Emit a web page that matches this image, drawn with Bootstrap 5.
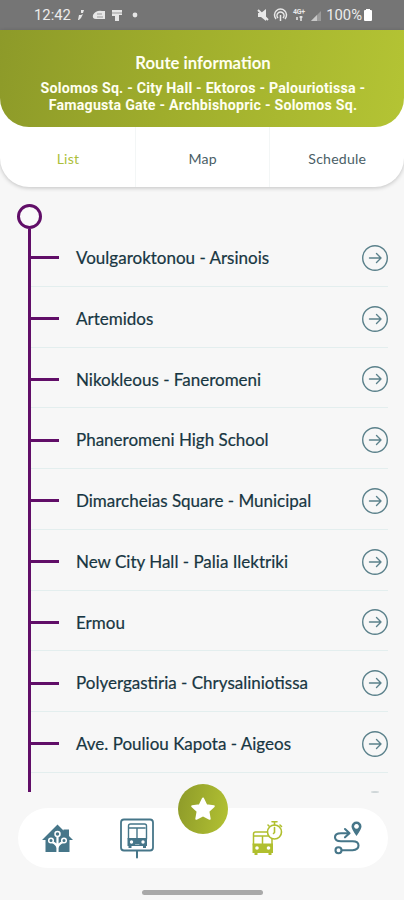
<!DOCTYPE html>
<html lang="en">
<head>
<meta charset="utf-8">
<meta name="viewport" content="width=device-width, initial-scale=1">
<title>Route information</title>
<link rel="stylesheet" href="https://cdn.jsdelivr.net/npm/bootstrap@5.3.0/dist/css/bootstrap.min.css">
<style>
  body { font-family: Lato, "Open Sans", sans-serif; background: #f7f7f7; color: #173642; }
  .screen { width: 404px; height: 900px; }
  .statusbar { height: 30px; background: #757575; color: #ececec; font: 14.8px/30px Roboto, sans-serif; padding: 0 31px 0 34px; }
  .top-panel { background: #fff; border-radius: 0 0 29px 29px; box-shadow: 0 1px 4px rgba(0,0,0,.22); height: 157px; }
  .route-head { height: 97px; border-radius: 0 0 29px 29px; background: linear-gradient(100deg, #8d9a29 0%, #9fad2c 42%, #b4c434 100%); color: #fffff0; padding-top: 22px; }
  .route-head h1 { font-size: 16.7px; line-height: 22px; font-weight: 700; margin: 0 0 6px; padding-left: 2px; }
  .route-head p { font: 700 14.2px/17px Roboto, sans-serif; letter-spacing: .22px; margin: 0; padding-left: 2px; }
  .view-tabs { height: 60px; font-size: 14.1px; letter-spacing: .2px; padding-left: 1px; }
  .view-tabs a { color: #4a5e66; text-decoration: none; padding-top: 3px; }
  .view-tabs a + a { border-left: 1px solid #f3f6f6; }
  .view-tabs a.current { color: #adbf3b; }
  .stops { padding: 17px 16px 0 17px; height: 605px; }
  .terminus { width: 25px; height: 25px; border: 3px solid #610e68; border-radius: 50%; background: #fafafa; }
  .track { width: 3px; background: #610e68; margin-left: 11px; height: 563px; }
  .stop-list { margin-top: -3px; }
  .stop-row { height: 60.75px; border-bottom: 1px solid #e3eeee; padding-top: 4px; font-size: 17px; -webkit-text-stroke: .2px #173642; }
  .tick { width: 28px; height: 3px; background: #610e68; margin-right: 17px; }
  .stop-row svg { width: 28px; height: 28px; }
  .dock { height: 60px; margin: 16px 16px 0 18px; border-radius: 30px; background: #fff; }
  .fav { left: 178px; top: 784px; width: 50px; height: 50px; border-radius: 50%; background: linear-gradient(100deg, #8d9a29, #b3c233); }
  .gesture { width: 121px; height: 5px; border-radius: 3px; background: #a9a9a9; margin: 22px 0 0 142px; }
  .peek { left: 371px; top: 791px; width: 8px; height: 2px; border-radius: 50%; background: #cfd6d8; }
</style>
</head>
<body>
<main class="screen position-relative overflow-hidden">
  <div class="statusbar d-flex justify-content-between align-items-center">
    <div class="d-flex align-items-center"><span>12:42</span>
      <svg width="72" height="16" viewBox="1 0 72 16" fill="#e6e6e6"><path d="M11 3h3l-1 3h-2zM9 8h2l2-1-2 4-2 2H8z"/><path d="M23 8q3-5 9-4h3v8H26q-4 0-3-4z"/><path d="M27 7h5M27 10h6" stroke="#999"/><path d="M42 3h10v5h-3v6h-4V9h-3z"/><path d="M42 6h10" stroke="#999"/><circle cx="65" cy="8" r="2.400"/></svg></div>
    <div class="d-flex align-items-center">
      <svg width="69" height="16" viewBox="0 0 69 16" fill="none" stroke="#e8e8e8"><path d="M1 6h3l5-4v12l-5-4H1z" fill="#e8e8e8" stroke="none"/><path d="M1 3l10 10" stroke-width="2"/><path d="M19 12a6 6 0 1 1 9 0M21 11a3.500 3.500 0 1 1 5 0M23.500 8v6" stroke-width="1.500"/><text x="36" y="7" font-family="Roboto" font-size="7" font-weight="700" fill="#e8e8e8" stroke="none" textLength="12">4G+</text><path d="M40 10v3M44 14V9m-1.500 1h3" stroke-width="1.500"/><path d="M54 14L64 4v10z" fill="#9a9a9a" stroke="none"/><path d="M54 14l6-6v6z" fill="#c8c8c8" stroke="none"/></svg><span>100%</span>
      <svg width="11" height="14" viewBox="0 0 11 14" fill="#fff"><path d="M4 1h4v1h1q1 0 1 1v9q0 1-1 1H3q-1 0-1-1V3q0-1 1-1h1z"/></svg></div>
  </div>

  <header class="top-panel">
    <div class="route-head text-center">
      <h1>Route information</h1>
      <p>Solomos Sq. - City Hall - Ektoros - Palouriotissa -<br>Famagusta Gate - Archbishopric - Solomos Sq.</p>
    </div>
    <nav class="view-tabs d-flex">
      <a class="current flex-fill w-100 d-flex align-items-center justify-content-center" href="#">List</a>
      <a class="flex-fill w-100 d-flex align-items-center justify-content-center" href="#">Map</a>
      <a class="flex-fill w-100 d-flex align-items-center justify-content-center" href="#">Schedule</a>
    </nav>
  </header>

  <section class="stops overflow-hidden">
    <div class="terminus"></div>
    <div class="d-flex align-items-start">
      <div class="track flex-shrink-0"></div>
      <div class="stop-list flex-grow-1" id="stopList"></div>
    </div>
  </section>

  <nav class="dock d-flex">
    <svg width="370" height="60" viewBox="18 808 370 60" fill="none" stroke="#467689" stroke-linecap="round" stroke-linejoin="round">
      <g stroke="none"><path fill="#467689" d="M42 840L57.500 824.500 63.500 830.500V829.500H69V836L73 840H69.500V852H45.500V840z"/><g stroke="#fff" stroke-width="1.500" fill="#467689"><path d="M57.500 852V836M57.500 848Q57 844 52 842M57.500 848Q58 844 63 842" stroke-width="2.200" fill="none"/><circle cx="57.500" cy="834" r="2.500"/><circle cx="51" cy="840.500" r="2.300"/><circle cx="64" cy="840.500" r="2.300"/></g></g>
      <rect x="121" y="819.500" width="32" height="31" rx="3" stroke-width="1.800"/><path d="M137 851v6.500" stroke-width="2"/>
      <path d="M128.500 839v-13q0-2 2-2h14q2 0 2 2v13M129 828h16M137 828v10" stroke-width="1.400"/><path fill="#467689" stroke="none" d="M127.500 838h19.500v8h-1v2h-3v-2h-11.500v2h-3v-2h-1z"/><circle cx="131.500" cy="842" r="1.700" fill="#fff" stroke="none"/><circle cx="143" cy="842" r="1.700" fill="#fff" stroke="none"/><path d="M135.500 844.500h3.500" stroke="#9ab5bf"/>
      <g stroke="#b0bf2e"><path d="M253.500 845v-11q0-2 2-2h14.500q2 0 2 2v11M254 836h18M262.500 836v8" stroke-width="1.500"/><path fill="#b0bf2e" stroke="none" d="M252.500 843.500h20.500v9.500h-1.500v2h-3v-2h-11v2h-3v-2h-2z"/><g fill="#fff" stroke="none"><circle cx="257" cy="848" r="1.800"/><circle cx="268.500" cy="848" r="1.800"/></g><circle cx="274.500" cy="832" r="7" fill="#fff" stroke-width="1.600"/><path d="M272 821.800h5M274.500 822v3M280 825l1.500 1.500M269 826l-1-1M274.500 832.500v-5M274.500 832.500l-1 1" stroke-width="1.600"/></g>
      <g stroke-width="2.100"><path d="M348 833.300h-7q-6 0-6 4t6 4h11.500q6 0 6 4.200t-6 4.800H342M345 829l4.500 4.300-4.500 4"/><circle cx="338.500" cy="850.300" r="3"/></g><path fill="#467689" fill-rule="evenodd" stroke="none" d="M356.500 836q-5-7-5-9.500a5 5 0 0 1 10 0q0 2.500-5 9.500zm0-12a2.400 2.400 0 1 0 .01 0z"/>
    </svg>
  </nav>
  <div class="gesture"></div>
  <span class="peek position-absolute"></span>
  <a class="fav position-absolute d-block" href="#" aria-label="Favourites"><svg class="d-block" viewBox="0 0 50 50"><path d="M25 14.500l3.300 6.700 7.500 1-5.400 5.200 1.300 7.400L25 31.300l-6.700 3.500 1.300-7.400-5.400-5.200 7.500-1z" fill="#fff" stroke="#fff" stroke-width="2" stroke-linejoin="round"/></svg></a>
</main>
<script src="https://cdn.jsdelivr.net/npm/bootstrap@5.3.0/dist/js/bootstrap.bundle.min.js"></script>
<script>
  const stops = ["Voulgaroktonou - Arsinois", "Artemidos", "Nikokleous - Faneromeni", "Phaneromeni High School", "Dimarcheias Square - Municipal", "New City Hall - Palia Ilektriki", "Ermou", "Polyergastiria - Chrysaliniotissa", "Ave. Pouliou Kapota - Aigeos"];
  document.getElementById("stopList").innerHTML = stops.map(name => `
    <div class="stop-row d-flex align-items-center"><span class="tick"></span><span class="flex-grow-1">${name}</span>
      <svg viewBox="0 0 28 28" fill="none" stroke="#5b818b" stroke-width="1.400" stroke-linecap="round" stroke-linejoin="round"><circle cx="15" cy="14" r="12.300"/><path d="M9.500 14H21M16.500 9.500L21 14l-4.500 4.500"/></svg></div>`).join("");
</script>
</body>
</html>
